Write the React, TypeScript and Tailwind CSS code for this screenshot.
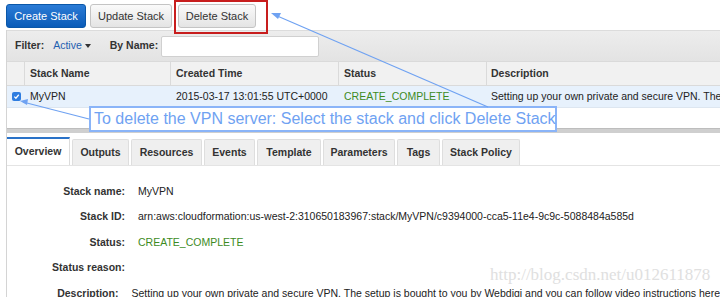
export default function App() {
  const tabs: [string, number][] = [
    ["Outputs", 57],
    ["Resources", 71],
    ["Events", 51],
    ["Template", 64],
    ["Parameters", 72],
    ["Tags", 43],
    ["Stack Policy", 78],
  ];
  const details: [string, string, string][] = [
    ["Stack name:", "MyVPN", "text-[#222]"],
    ["Stack ID:", "arn:aws:cloudformation:us-west-2:310650183967:stack/MyVPN/c9394000-cca5-11e4-9c9c-5088484a585d", "text-[#222]"],
    ["Status:", "CREATE_COMPLETE", "text-[#3d8b1e]"],
    ["Status reason:", "", "text-[#222]"],
    [
      "Description:",
      "Setting up your own private and secure VPN. The setup is bought to you by Webdigi and you can follow video instructions here",
      "text-[#222]",
    ],
  ];

  return (
    <div className="relative w-[720px] h-[297px] overflow-hidden bg-white font-['Liberation_Sans',Arial,sans-serif] text-[#222]">
      {/* Action buttons */}
      <div className="flex items-center gap-[4px] pl-[6px] pt-[4px] h-[28px] text-[11px]">
        <div className="h-[24px] w-[80px] flex items-center justify-center rounded-[3px] border border-[#0b57a8] bg-gradient-to-b from-[#2a7bd6] to-[#0a5cb8] text-white">
          Create Stack
        </div>
        <div className="h-[24px] w-[82px] flex items-center justify-center rounded-[3px] border border-[#c4c4c4] bg-gradient-to-b from-[#fafafa] to-[#e4e4e4] text-[#333]">
          Update Stack
        </div>
        <div className="ml-[2px] h-[24px] w-[78px] flex items-center justify-center rounded-[3px] border border-[#c4c4c4] bg-gradient-to-b from-[#fafafa] to-[#e4e4e4] text-[#333]">
          Delete Stack
        </div>
      </div>

      <div className="ml-[6px] mt-[2px] border-l border-[#d4d4d4] text-[10.5px]">
        {/* Filter bar */}
        <div className="h-[31px] flex items-center bg-gradient-to-b from-[#ededed] to-[#e3e3e3] border-t border-[#dcdcdc]">
          <span className="ml-[8px] font-bold text-[#333]">Filter:</span>
          <span className="ml-[9px] text-[#1f5fb0]">Active</span>
          <span className="ml-[3px] w-0 h-0 border-l-[3px] border-r-[3px] border-t-[4px] border-l-transparent border-r-transparent border-t-[#333]"></span>
          <span className="ml-[19px] font-bold text-[#333]">By Name:</span>
          <div className="ml-[3px] h-[21px] w-[158px] bg-white border border-[#d0d0d0] rounded-[2px]"></div>
        </div>

        {/* Table */}
        <div>
          <div className="flex h-[25px] items-center bg-[#f1f1f1] border-t border-b border-[#dadada] font-bold text-[#333]">
            <div className="w-[18px] h-full border-r border-[#dadada]"></div>
            <div className="w-[146px] h-full flex items-center pl-[5px] border-r border-[#dadada]">Stack Name</div>
            <div className="w-[168px] h-full flex items-center pl-[5px] border-r border-[#dadada]">Created Time</div>
            <div className="w-[148px] h-full flex items-center pl-[5px] border-r border-[#dadada]">Status</div>
            <div className="flex-1 h-full flex items-center pl-[4px]">Description</div>
          </div>
          <div className="flex h-[22px] items-center bg-[#e7f1fc] border-b border-[#dde6f0] whitespace-nowrap">
            <div className="w-[18px] h-full flex items-center justify-center">
              <div className="w-[9px] h-[9px] rounded-[2px] bg-[#2f7de0] flex items-center justify-center">
                <svg width="7" height="7" viewBox="0 0 8 8">
                  <path d="M1.5 4.2 L3.3 6 L6.6 2" fill="none" stroke="white" strokeWidth="1.4" />
                </svg>
              </div>
            </div>
            <div className="w-[146px] pl-[5px]">MyVPN</div>
            <div className="w-[168px] pl-[5px]">2015-03-17 13:01:55 UTC+0000</div>
            <div className="w-[148px] pl-[5px] text-[#3d8b1e]">CREATE_COMPLETE</div>
            <div className="flex-1 pl-[4px] overflow-hidden">
              Setting up your own private and secure VPN. The setup is bought to you
            </div>
          </div>
          <div className="h-[20px] bg-white"></div>
          <div className="h-[5px] bg-[#cfcfcf] border-t border-[#bdbdbd]"></div>
        </div>

        {/* Tabs */}
        <div className="mt-[5px] flex items-end gap-[2px] h-[28px] border-b border-[#e4e4e4] font-bold text-[#333]">
          <div className="w-[63px] h-[28px] flex items-center justify-center bg-white border-t-2 border-[#2a72c8] border-r border-r-[#dcdcdc]">
            Overview
          </div>
          {tabs.map(([t, w]) => (
            <div
              key={t}
              style={{ width: w }}
              className="h-[26px] flex items-center justify-center bg-[#efefef] border border-[#dedede] border-b-0 rounded-t-[2px]"
            >
              {t}
            </div>
          ))}
        </div>

        {/* Details */}
        <div className="pt-[13px]">
          {details.map(([label, value, color]) => (
            <div key={label} className="flex h-[25.5px] items-center whitespace-nowrap">
              <div className="w-[118px] text-right font-bold text-[#333]">{label}</div>
              <div className={`ml-[13px] ${color}`}>{value}</div>
            </div>
          ))}
        </div>
      </div>

      {/* Annotations */}
      <div className="absolute left-[174px] top-0 w-[94px] h-[34px] border-2 border-[#c81e1e]"></div>
      <div className="absolute left-[89px] top-[106px] w-[468px] h-[26px] border-2 border-[#8ab4f8] bg-white flex items-center pl-[3px] text-[16px] text-[#6fa2f2] whitespace-nowrap">
        To delete the VPN server: Select the stack and click Delete Stack
      </div>
      <svg className="absolute left-0 top-0 pointer-events-none" width="720" height="297">
        <line x1="488" y1="107" x2="275" y2="15" stroke="#6fa2f2" strokeWidth="1.2" />
        <path d="M271 13 L281 13 L278 19 Z" fill="#6fa2f2" />
        <line x1="89" y1="119" x2="23" y2="102" stroke="#6fa2f2" strokeWidth="1.2" />
        <path d="M20 101 L28 99 L27 105 Z" fill="#6fa2f2" />
      </svg>
      <div className="absolute left-[490px] top-[266px] text-[17px] leading-none text-[#e0e0e0] font-['Liberation_Serif',serif]">
        http://blog.csdn.net/u012611878
      </div>
    </div>
  );
}
